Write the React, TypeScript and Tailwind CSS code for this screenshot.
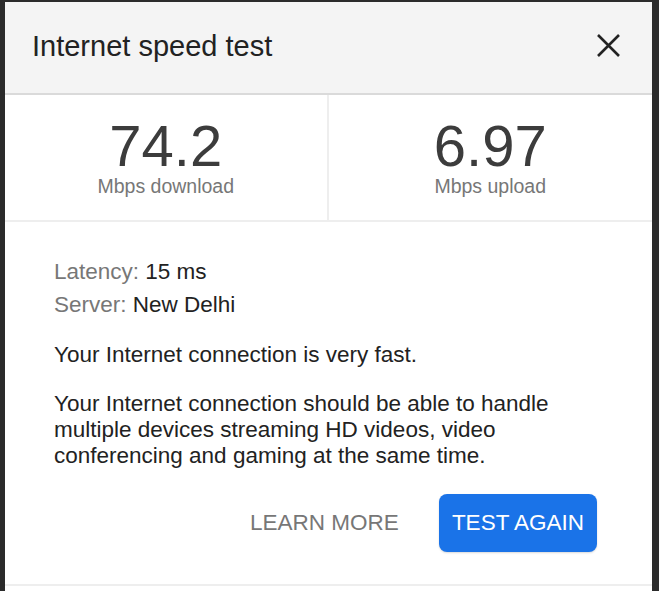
import React from "react";

export default function App() {
  const font = { fontFamily: '"Liberation Sans", Arial, sans-serif' };
  return (
    <div
      className="w-[659px] h-[591px] bg-[#2b2b2b] pl-[5px] pr-[7px] pt-[2px] overflow-hidden"
      style={font}
    >
      <div className="bg-white h-full flex flex-col">
        <div className="h-[93px] shrink-0 bg-[#f4f4f4] border-b-2 border-[#dadada] flex items-center justify-between pl-[27px] pr-[32px]">
          <div className="text-[29px] text-[#222] leading-none mt-[-2px]">Internet speed test</div>
          <svg width="23" height="23" viewBox="0 0 23 23" className="mb-[5px]">
            <path d="M1 1 L22 22 M22 1 L1 22" stroke="#222" strokeWidth="2.6" fill="none" />
          </svg>
        </div>
        <div className="grid grid-cols-2 h-[127px] shrink-0 border-b-2 border-[#eeeeee]">
          <div className="flex flex-col items-center pt-[22px] border-r-2 border-[#eeeeee]">
            <div className="text-[58px] leading-[58px] text-[#3c3c3c]">74.2</div>
            <div className="text-[19.5px] leading-[20px] text-[#777] mt-[1px]">Mbps download</div>
          </div>
          <div className="flex flex-col items-center pt-[22px]">
            <div className="text-[58px] leading-[58px] text-[#3c3c3c]">6.97</div>
            <div className="text-[19.5px] leading-[20px] text-[#777] mt-[1px]">Mbps upload</div>
          </div>
        </div>
        <div className="pl-[49px] pr-[55px] pt-[33px] pb-[32px] border-b-2 border-[#eeeeee] text-[22.5px] text-[#222]">
          <div className="leading-[33px]">
            <span className="text-[#777]">Latency:</span> 15 ms
          </div>
          <div className="leading-[33px]">
            <span className="text-[#777]">Server:</span> New Delhi
          </div>
          <p className="leading-[26px] mt-[21px]">Your Internet connection is very fast.</p>
          <p className="leading-[26px] mt-[23px]">
            Your Internet connection should be able to handle multiple devices streaming HD videos, video
            conferencing and gaming at the same time.
          </p>
          <div className="flex justify-end items-center mt-[25px] gap-[40px]">
            <span className="text-[#777] leading-none">LEARN MORE</span>
            <button
              className="bg-[#1a73e8] text-white rounded-[8px] h-[58px] px-[13px] leading-none shadow-[0_1px_2px_rgba(0,0,0,0.15)]"
              style={font}
            >
              TEST AGAIN
            </button>
          </div>
        </div>
      </div>
    </div>
  );
}
